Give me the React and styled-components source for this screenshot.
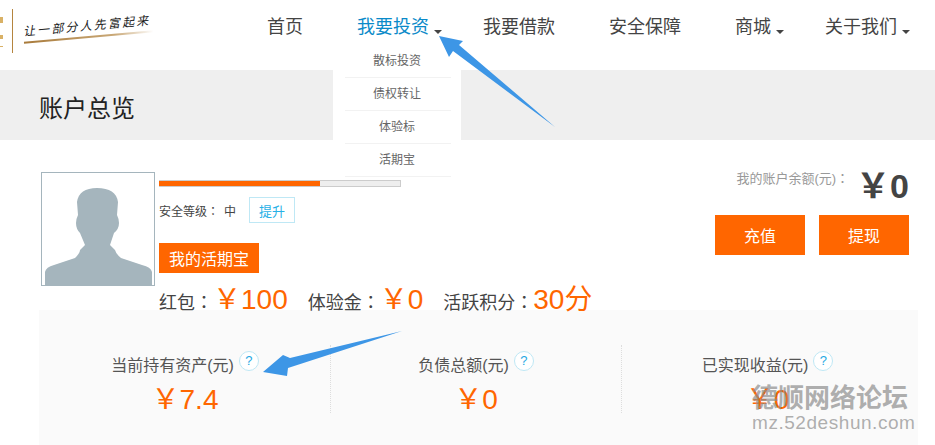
import styled, { createGlobalStyle } from "styled-components";

const GlobalStyle = createGlobalStyle`
  html, body {
    margin: 0;
    padding: 0;
    background: #fff;
    overflow: hidden;
  }
  body {
    font-family: "Liberation Sans", "Noto Sans CJK SC", sans-serif;
    color: #444;
  }
`;

const Page = styled.div`
  position: relative;
  width: 935px;
  height: 445px;
  overflow: hidden;
`;

const Header = styled.header`
  position: relative;
  height: 70px;
  display: flex;
  z-index: 2;
`;

const Logo = styled.div`
  width: 240px;
  display: flex;
  align-items: flex-start;
`;

const LogoMark = styled.div`
  width: 12px;
  height: 44px;
  margin-top: 9px;
  border-right: 1px solid #b5853f;
  flex: none;
  svg {
    display: block;
  }
`;

const Slogan = styled.div`
  width: 130px;
  margin: 19px 0 0 10px;
  padding-bottom: 5px;
  font-size: 12px;
  line-height: 14px;
  letter-spacing: 2.2px;
  font-style: italic;
  white-space: nowrap;
  color: #222;
  transform: rotate(-5deg);
  background: linear-gradient(90deg, #a87a3a, #c9a877 70%, #fff) left bottom / 100% 2px no-repeat;
`;

const Nav = styled.nav`
  display: flex;
  height: 54px;
`;

const NavItem = styled.div`
  position: relative;
  padding: 0 27px;
  font-size: 18px;
  line-height: 54px;
  white-space: nowrap;
  color: ${(p) => (p.$active ? "#0a8ac9" : "#444")};
  ${(p) =>
    p.$caret &&
    `&::after {
      content: "";
      position: absolute;
      right: 14px;
      top: 30px;
      border-style: solid;
      border-width: 4px 4px 0;
      border-color: #444 transparent transparent;
    }`}
`;

const Dropdown = styled.ul`
  position: absolute;
  left: 333px;
  top: 45px;
  width: 128px;
  box-sizing: border-box;
  margin: 0;
  padding: 0 10px 0 12px;
  list-style: none;
  background: #fff;
`;

const DropdownItem = styled.li`
  height: 33px;
  box-sizing: border-box;
  padding-right: 2px;
  border-bottom: 1px solid #f2f2f2;
  text-align: center;
  font-size: 12px;
  line-height: 32px;
  color: #666;
`;

const Band = styled.div`
  height: 70px;
  background: #efefef;
  padding-left: 39px;
`;

const BandTitle = styled.h1`
  margin: 0;
  font-size: 24px;
  font-weight: 400;
  line-height: 78px;
  color: #222;
`;

const Profile = styled.section`
  height: 170px;
  box-sizing: border-box;
  padding: 32px 26px 0 41px;
  display: flex;
`;

const Avatar = styled.div`
  width: 114px;
  height: 114px;
  box-sizing: border-box;
  border: 1px solid #a5b5bd;
  flex: none;
  svg {
    display: block;
  }
`;

const Info = styled.div`
  margin-left: 4px;
  flex: 1;
  padding-top: 8px;
`;

const Progress = styled.div`
  width: 242px;
  height: 7px;
  box-sizing: border-box;
  border: 1px solid #ccc;
  border-left: 0;
  background: #eee;
`;

const ProgressFill = styled.div`
  height: 5px;
  background: #f60;
`;

const SafetyRow = styled.div`
  margin-top: 10px;
  display: flex;
  align-items: center;
  font-size: 12px;
  color: #444;
`;

const Colon = styled.span`
  font-family: "Noto Sans CJK TC", sans-serif;
`;

const Level = styled.span`
  margin-left: 5px;
`;

const RaiseButton = styled.button`
  width: 46px;
  height: 26px;
  margin-left: 13px;
  padding: 0;
  border: 1px solid #bfe8f5;
  background: #fff;
  font: inherit;
  font-size: 13px;
  color: #27b0e6;
`;

const SavingsButton = styled.button`
  display: block;
  width: 100px;
  height: 30px;
  margin-top: 20px;
  padding: 0;
  border: 0;
  background: #f60;
  font: inherit;
  font-size: 16px;
  color: #fff;
`;

const Rewards = styled.div`
  margin-top: 4px;
  display: flex;
  align-items: baseline;
  height: 36px;
  white-space: nowrap;
`;

const RewardLabel = styled.span`
  font-size: 18px;
  color: #444;
  margin-left: ${(p) => p.$gap || 0}px;
`;

const RewardValue = styled.span`
  font-size: 28px;
  color: #f60;
`;

const Balance = styled.div`
  width: 194px;
  flex: none;
  margin-top: -7px;
`;

const BalanceRow = styled.div`
  display: flex;
  justify-content: flex-end;
  align-items: flex-start;
  height: 43px;
`;

const BalanceLabel = styled.span`
  margin-top: 4px;
  font-size: 13px;
  line-height: 18px;
  color: #999;
`;

const BalanceValue = styled.strong`
  margin-left: 7px;
  font-size: 34px;
  line-height: 43px;
  color: #444;
`;

const ActionRow = styled.div`
  margin-top: 7px;
  display: flex;
  gap: 14px;
`;

const ActionButton = styled.button`
  width: 90px;
  height: 40px;
  padding: 0;
  border: 0;
  background: #f60;
  font: inherit;
  font-size: 16px;
  color: #fff;
`;

const StatsPanel = styled.section`
  height: 135px;
  box-sizing: border-box;
  margin: 0 17px 0 39px;
  padding: 35px 0 0 1px;
  display: flex;
  background: #fafafa;
`;

const StatCell = styled.div`
  width: 291px;
  height: 68px;
  box-sizing: border-box;
  text-align: center;
  border-right: ${(p) => (p.$last ? "0" : "1px dotted #ddd")};
`;

const StatLabel = styled.div`
  display: flex;
  justify-content: center;
  height: 30px;
  font-size: 16px;
  line-height: 41px;
  color: #555;
`;

const HelpIcon = styled.span`
  width: 18px;
  height: 18px;
  margin: 6px 0 0 5px;
  border: 1px solid #bfe8f5;
  border-radius: 50%;
  background: #fff;
  font-size: 13px;
  line-height: 18px;
  color: #27a9e3;
`;

const StatValue = styled.div`
  margin-top: 5px;
  font-size: 28px;
  line-height: 40px;
  color: #f60;
`;

const Arrow = styled.svg`
  position: absolute;
  left: 0;
  top: 0;
  z-index: 3;
  pointer-events: none;
`;

const Watermark = styled.div`
  position: absolute;
  left: 752px;
  top: 382px;
  z-index: 4;
  color: rgba(140, 140, 140, 0.7);
  white-space: nowrap;
`;

const WatermarkTitle = styled.div`
  font-size: 26px;
  font-weight: 700;
  line-height: 32px;
`;

const WatermarkUrl = styled.div`
  font-size: 19px;
  line-height: 18px;
  letter-spacing: 0.55px;
`;

const navItems = [
  { label: "首页" },
  { label: "我要投资", active: true, caret: true },
  { label: "我要借款" },
  { label: "安全保障" },
  { label: "商城", caret: true },
  { label: "关于我们", caret: true }
];

const menuItems = ["散标投资", "债权转让", "体验标", "活期宝"];

const stats = [
  { label: "当前持有资产(元)", value: "￥7.4" },
  { label: "负债总额(元)", value: "￥0" },
  { label: "已实现收益(元)", value: "￥0" }
];

const App = () => {
  return (
    <Page>
      <GlobalStyle />
      <Header>
        <Logo>
          <LogoMark>
            <svg width="12" height="44" viewBox="0 0 12 44">
              <path d="M0 8h3v6H0zM0 26h3v4H0zM0 37h3v1H0z" fill="#d9b166" />
            </svg>
          </LogoMark>
          <Slogan>让一部分人先富起来</Slogan>
        </Logo>
        <Nav>
          {navItems.map((item) => (
            <NavItem key={item.label} $active={item.active} $caret={item.caret}>
              {item.label}
            </NavItem>
          ))}
        </Nav>
        <Dropdown>
          {menuItems.map((item) => (
            <DropdownItem key={item}>{item}</DropdownItem>
          ))}
        </Dropdown>
      </Header>
      <Band>
        <BandTitle>账户总览</BandTitle>
      </Band>
      <Profile>
        <Avatar>
          <svg width="112" height="112" viewBox="0 0 112 112">
            <path
              d="M3 112V99Q4 94 12 92L33 85Q38 80 38 77L43 72L38 60Q34 56 34 50Q34 46 36 42L35 29Q37 15 55 15Q74 15 76 29L75 42Q77 46 77 50Q77 56 72 60L68 72L73 77Q74 81 79 85L100 92Q109 94 110 99V112Z"
              fill="#a5b5bd"
            />
          </svg>
        </Avatar>
        <Info>
          <Progress>
            <ProgressFill style={{ width: `${(162 / 242) * 100}%` }} />
          </Progress>
          <SafetyRow>
            安全等级<Colon>：</Colon>
            <Level>中</Level>
            <RaiseButton>提升</RaiseButton>
          </SafetyRow>
          <SavingsButton>我的活期宝</SavingsButton>
          <Rewards>
            <RewardLabel>红包<Colon>：</Colon></RewardLabel>
            <RewardValue>￥100</RewardValue>
            <RewardLabel $gap={20}>体验金<Colon>：</Colon></RewardLabel>
            <RewardValue>￥0</RewardValue>
            <RewardLabel $gap={20}>活跃积分<Colon>：</Colon></RewardLabel>
            <RewardValue>30分</RewardValue>
          </Rewards>
        </Info>
        <Balance>
          <BalanceRow>
            <BalanceLabel>我的账户余额(元)<Colon>：</Colon></BalanceLabel>
            <BalanceValue>￥0</BalanceValue>
          </BalanceRow>
          <ActionRow>
            <ActionButton>充值</ActionButton>
            <ActionButton>提现</ActionButton>
          </ActionRow>
        </Balance>
      </Profile>
      <StatsPanel>
        {stats.map((stat, index) => (
          <StatCell key={stat.label} $last={index === stats.length - 1}>
            <StatLabel>
              {stat.label}
              <HelpIcon>?</HelpIcon>
            </StatLabel>
            <StatValue>{stat.value}</StatValue>
          </StatCell>
        ))}
      </StatsPanel>
      <Arrow width="935" height="445" viewBox="0 0 935 445">
        <path d="M439 36L463 41L459 45L555 127L453 51L449 57Z" fill="#3d96e6" />
        <path d="M263 372L283 355L290 358L402 331L288 368L287 376Z" fill="#3d96e6" />
      </Arrow>
      <Watermark>
        <WatermarkTitle>德顺网络论坛</WatermarkTitle>
        <WatermarkUrl>mz.52deshun.com</WatermarkUrl>
      </Watermark>
    </Page>
  );
};

export default App;
